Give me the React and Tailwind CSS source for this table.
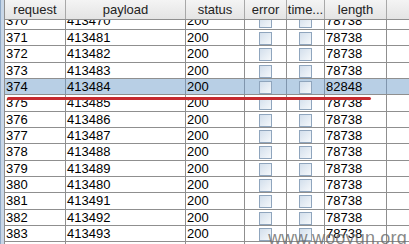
import React from "react";

const rows = [
  ["370", "413470", "200", "78738"],
  ["371", "413481", "200", "78738"],
  ["372", "413482", "200", "78738"],
  ["373", "413483", "200", "78738"],
  ["374", "413484", "200", "82848"],
  ["375", "413485", "200", "78738"],
  ["376", "413486", "200", "78738"],
  ["377", "413487", "200", "78738"],
  ["378", "413488", "200", "78738"],
  ["379", "413489", "200", "78738"],
  ["380", "413480", "200", "78738"],
  ["381", "413491", "200", "78738"],
  ["382", "413492", "200", "78738"],
  ["383", "413493", "200", "78738"],
  ["384", "413494", "200", "78738"],
];

const heights = [
  "h-[17px]", "h-[16px]", "h-[17px]", "h-[16px]", "h-[16px]", "h-[17px]", "h-[16px]",
  "h-[16px]", "h-[17px]", "h-[16px]", "h-[16px]", "h-[17px]", "h-[16px]", "h-[16px]", "h-[16px]",
];

function Check() {
  return (
    <div className="w-[13px] h-[13px] border border-[#8fa5bd] bg-gradient-to-br from-[#d3dfec] to-[#f5f8fb]" />
  );
}

export default function App() {
  return (
    <div
      className="relative w-[409px] h-[244px] overflow-hidden bg-white flex text-[13px] text-black"
      style={{ fontFamily: '"Liberation Sans", Arial, sans-serif' }}
    >
      <div className="w-[4px] h-full bg-[#c9d7e7] border-l border-[#8ea8c6]" />
      <div className="flex-1 flex flex-col border-l border-[#8f8f8f] min-w-0">
        {/* header */}
        <div className="flex h-[20px] shrink-0 border-b border-[#8f8f8f] bg-gradient-to-b from-[#f4f4f4] to-[#e4e4e4] text-[#222]">
          <div className="w-[61px] border-r border-[#a8a8a8] flex items-center justify-center">request</div>
          <div className="w-[120px] border-r border-[#a8a8a8] flex items-center justify-center">payload</div>
          <div className="w-[59px] border-r border-[#a8a8a8] flex items-center justify-center">status</div>
          <div className="w-[42px] border-r border-[#a8a8a8] flex items-center justify-center">error</div>
          <div className="w-[38px] border-r border-[#a8a8a8] flex items-center justify-center">time...</div>
          <div className="w-[62px] border-r border-[#a8a8a8] flex items-center justify-center">length</div>
          <div className="flex-1" />
        </div>
        {/* body */}
        <div className="flex-1 overflow-hidden">
          <div className="mt-[-7px]">
            {rows.map((r, i) => {
              const sel = r[0] === "374";
              return (
                <div
                  key={r[0]}
                  className={`flex border-b border-[#8f8f8f] ${heights[i]} ${sel ? "bg-[#b8cfe5]" : "bg-white"}`}
                >
                  <div className={`w-[61px] border-r pl-[1px] flex items-center ${sel ? "border-[#7f95ad]" : "border-[#8f8f8f]"}`}>{r[0]}</div>
                  <div className={`w-[120px] border-r pl-[1px] flex items-center ${sel ? "border-[#7f95ad]" : "border-[#8f8f8f]"}`}>{r[1]}</div>
                  <div className={`w-[59px] border-r pl-[1px] flex items-center ${sel ? "border-[#7f95ad]" : "border-[#8f8f8f]"}`}>{r[2]}</div>
                  <div className={`w-[42px] border-r flex items-center justify-center pt-[1px] ${sel ? "border-[#7f95ad]" : "border-[#8f8f8f]"}`}><Check /></div>
                  <div className={`w-[38px] border-r flex items-center justify-center pt-[1px] ${sel ? "border-[#7f95ad]" : "border-[#8f8f8f]"}`}><Check /></div>
                  <div className={`w-[62px] border-r pl-[1px] flex items-center ${sel ? "border-[#7f95ad]" : "border-[#8f8f8f]"}`}>{r[3]}</div>
                  <div className="flex-1" />
                </div>
              );
            })}
          </div>
        </div>
      </div>
      {/* red annotation line */}
      <div className="absolute left-[7px] top-[97px] w-[364px] h-[3px] bg-[#c62a2e] rounded-full" />
      {/* watermark */}
      <div className="absolute right-[2px] bottom-[-3px] text-[18px] text-[#6a6a6a]/80 leading-none tracking-[0.2px]">
        www.wooyun.org
      </div>
    </div>
  );
}
